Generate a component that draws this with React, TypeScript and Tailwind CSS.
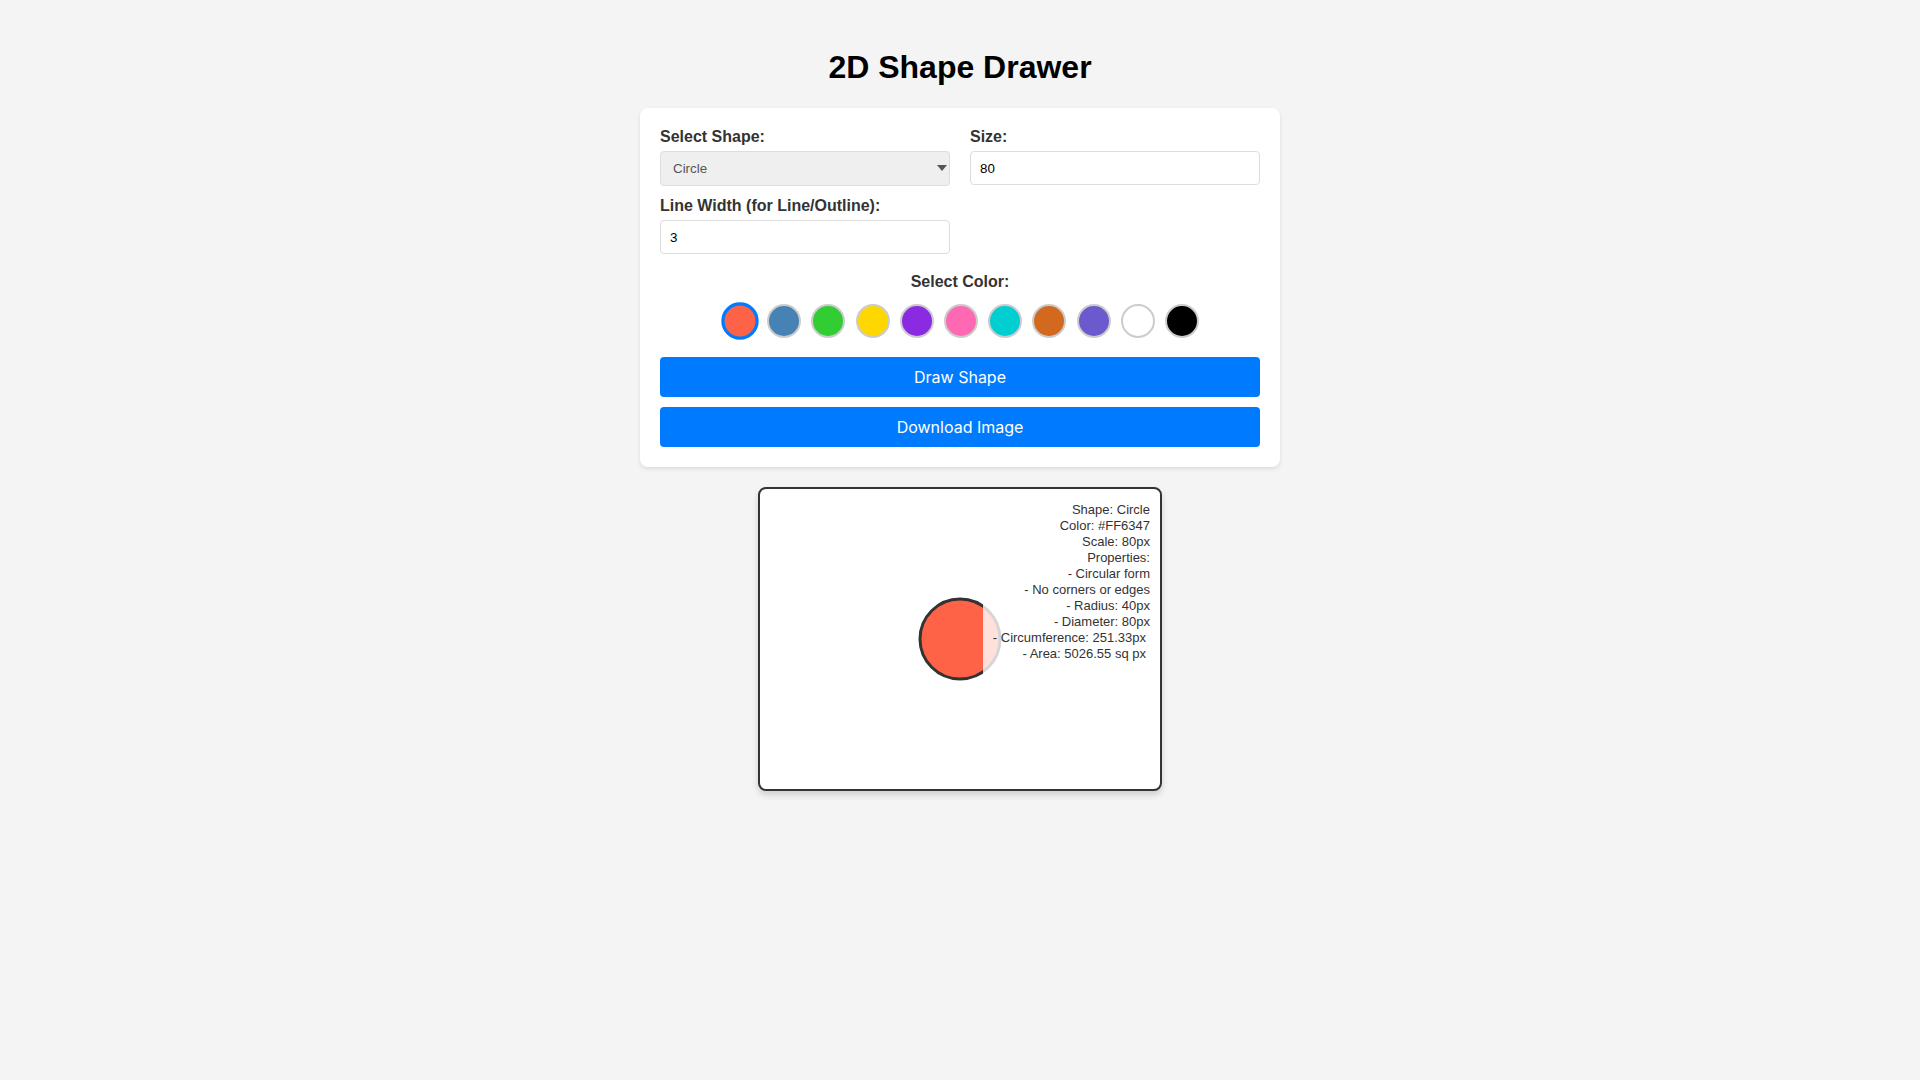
import { useState } from "react";

const colors = [
  "#FF6347",
  "#4682B4",
  "#32CD32",
  "#FFD700",
  "#8A2BE2",
  "#FF69B4",
  "#00CED1",
  "#D2691E",
  "#6A5ACD",
  "#FFFFFF",
  "#000000",
];

const info = [
  "Shape: Circle",
  "Color: #FF6347",
  "Scale: 80px",
  "Properties:",
  "- Circular form",
  "- No corners or edges",
  "- Radius: 40px",
  "- Diameter: 80px",
];

export default function App() {
  const [color, setColor] = useState("#FF6347");

  return (
    <div className="min-h-screen bg-[#f4f4f4] pt-[49px] font-['Liberation_Sans',Arial,sans-serif] text-[#333]">
      <h1 className="mb-[22px] text-center text-[32px] font-bold leading-[37px] text-black">
        2D Shape Drawer
      </h1>

      <div className="mx-auto w-[640px] rounded-lg bg-white p-5 shadow-[0_2px_4px_rgba(0,0,0,0.1)]">
        <div className="grid grid-cols-2 gap-x-5">
          <div className="mb-[10px] flex flex-col">
            <label className="mb-[5px] text-base font-bold leading-[18px]">Select Shape:</label>
            <div className="relative">
              <select
                defaultValue="circle"
                className="h-[35px] w-full appearance-none rounded border border-[#ddd] bg-[#efefef] pl-[12px] text-[13.33px] text-[#555] outline-none"
              >
                <option value="circle">Circle</option>
                <option value="square">Square</option>
                <option value="triangle">Triangle</option>
                <option value="line">Line</option>
              </select>
              <svg
                className="pointer-events-none absolute right-[3px] top-[14px]"
                width="10"
                height="6"
                viewBox="0 0 10 6"
              >
                <path d="M0 0h10L5 6z" fill="#555" />
              </svg>
            </div>
          </div>
          <div className="mb-[10px] flex flex-col">
            <label className="mb-[5px] text-base font-bold leading-[18px]">Size:</label>
            <input
              defaultValue="80"
              className="h-[34px] w-full rounded border border-[#ddd] bg-white px-[9px] text-[13.33px] text-black outline-none"
            />
          </div>
          <div className="mb-[10px] flex flex-col">
            <label className="mb-[5px] mt-[1px] text-base font-bold leading-[18px]">
              Line Width (for Line/Outline):
            </label>
            <input
              defaultValue="3"
              className="h-[34px] w-full rounded border border-[#ddd] bg-white px-[9px] text-[13.33px] text-black outline-none"
            />
          </div>
        </div>

        <div className="mt-[9px] text-center">
          <p className="text-base font-bold leading-[18px]">Select Color:</p>
          <div className="ml-[2px] mt-[8px] flex justify-center gap-[10.2px] py-[5px]">
            {colors.map((c) => (
              <button
                key={c}
                onClick={() => setColor(c)}
                style={{ backgroundColor: c }}
                className={
                  c === color
                    ? "h-[34px] w-[34px] scale-110 rounded-full border-[3px] border-[#007bff]"
                    : "h-[34px] w-[34px] rounded-full border-2 border-[#ccc]"
                }
              />
            ))}
          </div>
        </div>

        <div className="mt-[14px] flex flex-col gap-[10px] font-['Inter',sans-serif]">
          <button className="h-10 w-full rounded bg-[#007bff] text-base text-white">Draw Shape</button>
          <button className="h-10 w-full rounded bg-[#007bff] text-base text-white">Download Image</button>
        </div>
      </div>

      <div className="relative mx-auto mt-5 h-[304px] w-[404px] overflow-hidden rounded-lg border-2 border-[#333] bg-white shadow-[0_4px_6px_rgba(0,0,0,0.15)]">
        <svg width="400" height="300" viewBox="0 0 400 300" className="block">
          <circle cx="200" cy="150" r="40" fill="#FF6347" stroke="#333" strokeWidth="3" />
        </svg>
        <div className="absolute right-0 top-[2px] h-[196px] w-[177px] bg-white/80 pr-[10px] pt-[11px] text-right text-[13px] leading-[16px] text-[#333]">
          {info.map((line) => (
            <div key={line} className="whitespace-nowrap">{line}</div>
          ))}
          <div className="whitespace-nowrap pr-[4px]">- Circumference: 251.33px</div>
          <div className="whitespace-nowrap pr-[4px]">- Area: 5026.55 sq px</div>
        </div>
      </div>
    </div>
  );
}
